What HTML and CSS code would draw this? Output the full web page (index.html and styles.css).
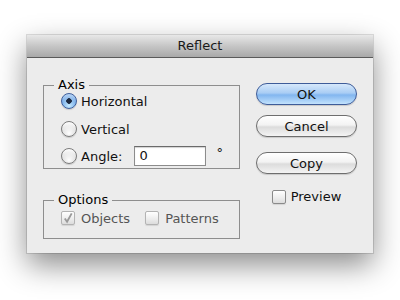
FILE: index.html
```html
<!DOCTYPE html>
<html>
    <head>
        <title>Reflect</title>
        <link rel="stylesheet" href="styles.css">
    </head>
    <body>
        <div class="window">
            <div class="titlebar">Reflect</div>
            <div class="content">
                <div class="left">
                    <fieldset class="group axis">
                        <legend>Axis</legend>
                        <label class="row"><span class="radio on"></span>Horizontal</label>
                        <label class="row r2"><span class="radio"></span>Vertical</label>
                        <div class="row r3">
                            <span class="radio"></span>Angle:
                            <span class="field">0</span>
                            <span class="deg">°</span>
                        </div>
                    </fieldset>
                    <fieldset class="group options">
                        <legend>Options</legend>
                        <div class="row">
                            <label class="check-item off"><span class="box checked"><svg width="13" height="13" viewBox="0 0 13 13"><path d="M3 6.5 L5.5 10 L10.5 1" fill="none" stroke="#9a9a9a" stroke-width="2"/></svg></span>Objects</label>
                            <label class="check-item off pat"><span class="box"></span>Patterns</label>
                        </div>
                    </fieldset>
                </div>
                <div class="right">
                    <button class="btn default">OK</button>
                    <button class="btn cancel">Cancel</button>
                    <button class="btn copy">Copy</button>
                    <label class="check-item preview"><span class="box"></span>Preview</label>
                </div>
            </div>
        </div>
    </body>
</html>
```
FILE: styles.css
```css
* {
    margin: 0;
    padding: 0;
    box-sizing: border-box;
}
html,
body {
    min-height: 300px;
}
body {
    background-color: #fff;
    font-family: "DejaVu Sans", sans-serif;
    font-size: 13px;
    color: #111;
    padding-top: 35px;
}
.window {
    width: 346px;
    height: 218px;
    margin-left: 27px;
    background-color: #ececec;
    box-shadow: 0 0 0 1px rgba(0, 0, 0, 0.12), 0 12px 28px rgba(0, 0, 0, 0.45);
}
.titlebar {
    height: 23px;
    line-height: 22px;
    text-align: center;
    color: #1a1a1a;
    background: linear-gradient(#e8e8e8, #c6c6c6 50%, #a9a9a9);
    border-bottom: 1px solid #5a5a5a;
}
.content {
    display: flex;
    padding: 0 16px;
}
.left {
    width: 197px;
}
.group {
    border: 1px solid #8e8e8e;
    padding: 0 0 0 17px;
}
.group legend {
    line-height: 14px;
    padding: 0 4px;
    margin-left: -7px;
    color: #000;
}
.axis {
    margin-top: 20px;
    padding-bottom: 2px;
}
.options {
    margin-top: 24px;
    padding-bottom: 11px;
}
.row {
    display: flex;
    align-items: center;
    height: 18px;
}
.options .row {
    margin-top: 2px;
}
.axis .r2 {
    margin-top: 10px;
}
.axis .r3 {
    margin-top: 8px;
    height: 20px;
}
.radio {
    width: 16px;
    height: 16px;
    border-radius: 50%;
    margin-right: 4px;
    border: 1px solid #7c7c7c;
    background: radial-gradient(circle at 50% 80%, #ffffff 0, rgba(255, 255, 255, 0) 60%), linear-gradient(#fdfdfd, #e2e2e2 55%, #cfcfcf);
    box-shadow: 0 1px 1px rgba(0, 0, 0, 0.15);
}
.radio.on {
    border-color: #3f5f9c;
    background: radial-gradient(circle, #1d2a40 0, #1d2a40 2.5px, rgba(0, 0, 0, 0) 3px), radial-gradient(circle at 50% 85%, #c9ecff 0, rgba(201, 236, 255, 0) 60%), linear-gradient(#b9d5f5, #7aaee8 55%, #5c9be3);
}
.field {
    width: 72px;
    height: 20px;
    margin-left: 12px;
    padding-left: 4px;
    line-height: 18px;
    background-color: #fff;
    border: 1px solid #8c8c8c;
    border-top-color: #6a6a6a;
    box-shadow: inset 0 1px 1px rgba(0, 0, 0, 0.18);
}
.deg {
    margin-left: 10px;
    align-self: flex-start;
    line-height: 14px;
}
.check-item {
    display: flex;
    align-items: center;
}
.box {
    width: 14px;
    height: 14px;
    margin-right: 6px;
    border: 1px solid #8a8a8a;
    border-radius: 2px;
    background: linear-gradient(#ffffff, #ececec 60%, #dcdcdc);
    box-shadow: 0 1px 1px rgba(0, 0, 0, 0.1);
    display: flex;
    align-items: center;
    justify-content: center;
}
.off {
    color: #555;
}
.off .box {
    border-color: #b3b3b3;
}
.pat {
    margin-left: 15px;
}
.right {
    width: 101px;
    margin-left: 16px;
    padding-top: 25px;
    display: flex;
    flex-direction: column;
}
.btn {
    height: 22px;
    border-radius: 11px;
    font-family: "DejaVu Sans", sans-serif;
    font-size: 13px;
    color: #111;
    border: 1px solid #6e6e6e;
    background: linear-gradient(#ffffff, #f3f3f3 45%, #dcdcdc 55%, #f4f4f4);
    box-shadow: 0 1px 1px rgba(0, 0, 0, 0.15);
}
.btn.default {
    border-color: #3e5c99;
    background: linear-gradient(#d6e8fb, #a9cdf4 45%, #82b6ef 55%, #c2e2fd);
}
.cancel {
    margin-top: 10px;
}
.copy {
    margin-top: 15px;
}
.preview {
    margin-top: 15px;
    justify-content: center;
}
.preview .box {
    margin-right: 5px;
}
```
